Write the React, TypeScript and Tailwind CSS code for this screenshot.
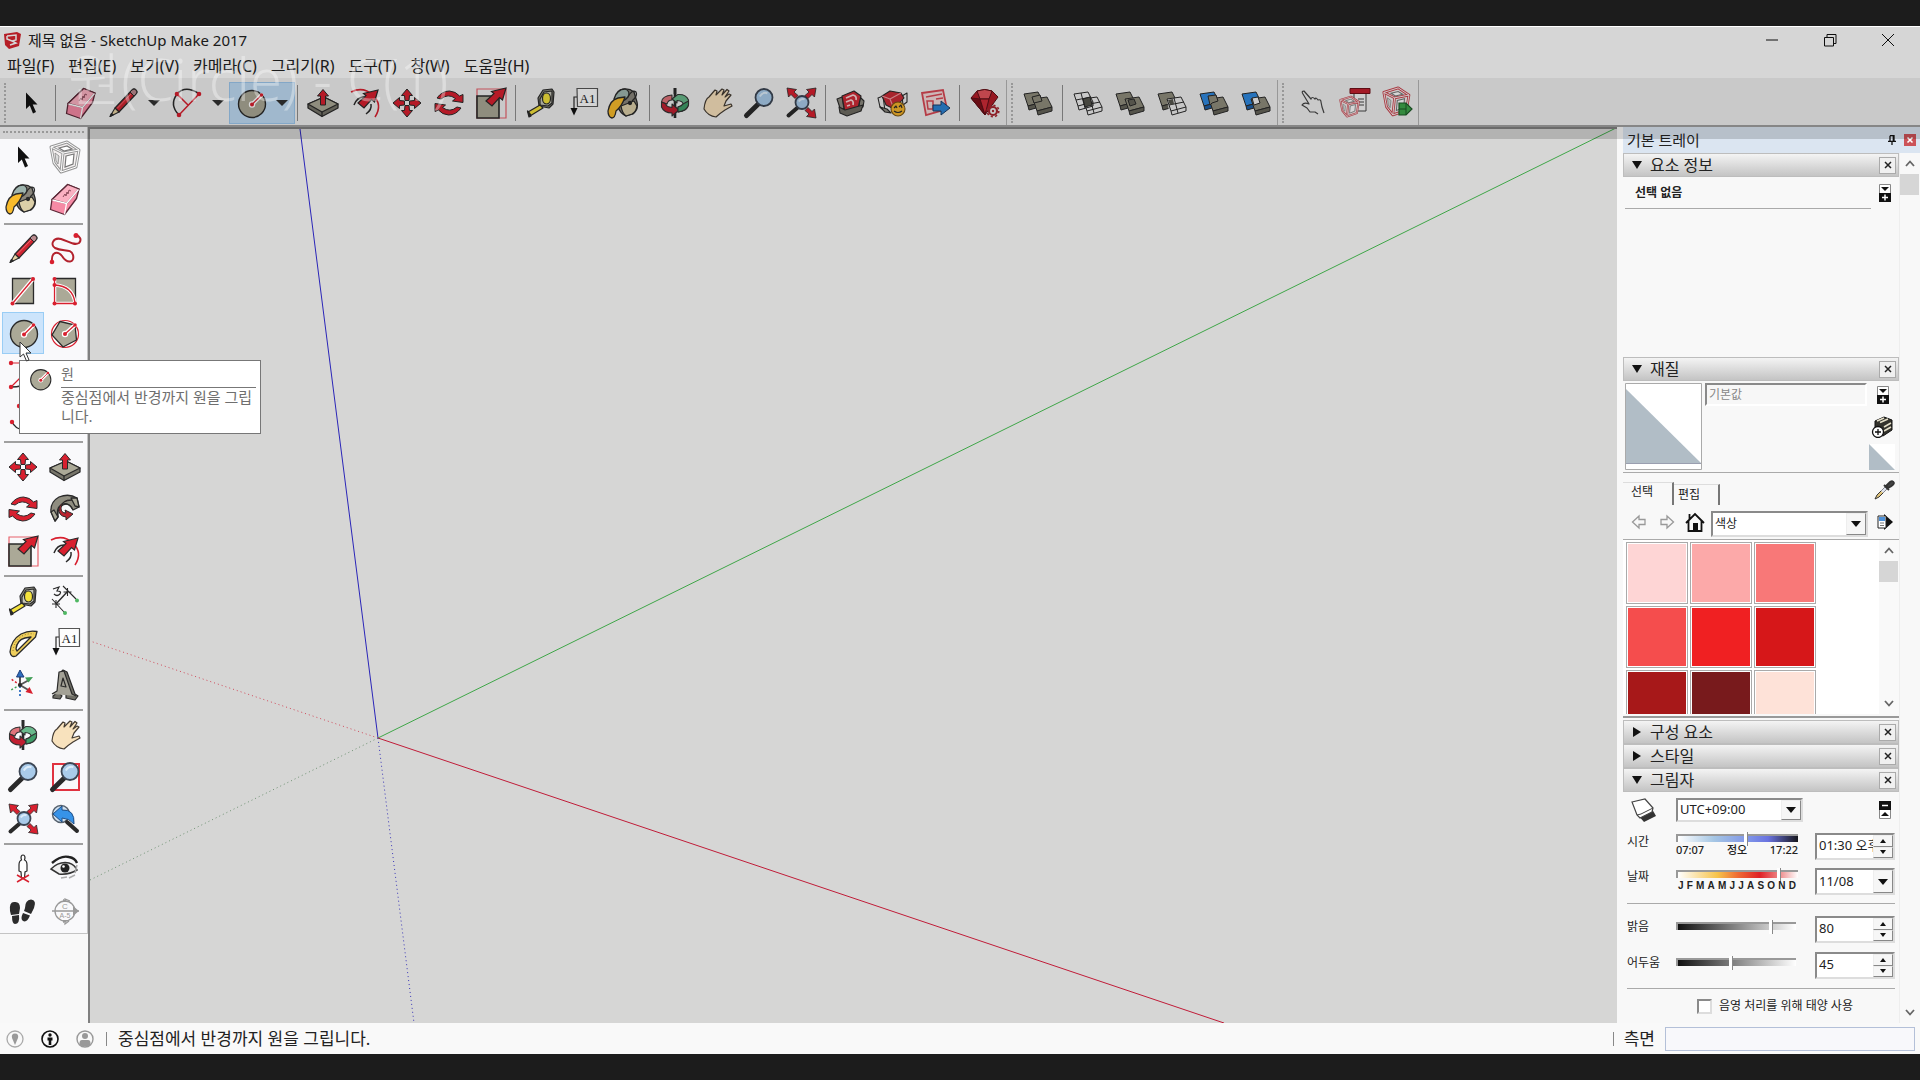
import { useState } from 'react';
import type { ReactNode } from 'react';

const RED = '#d8202f';
const INK = '#2a2a2a';
const STONE = '#aba997';

const MENUS = ['파일(F)', '편집(E)', '보기(V)', '카메라(C)', '그리기(R)', '도구(T)', '창(W)', '도움말(H)'];

const SWATCHES = [
  'bg-[#fed5d5]',
  'bg-[#fca9a9]',
  'bg-[#f87878]',
  'bg-[#f54d4d]',
  'bg-[#f02022]',
  'bg-[#d61719]',
  'bg-[#a71819]',
  'bg-[#781a1c]',
  'bg-[#fee2d8]',
];

// Reusable drawing parts

const bigArrow = (
  <path d="M31 1 L27.5 13 L24.5 10.5 L17 19 L11 14 L19 6.500 L16.500 4.500Z" fill={RED} stroke={INK} strokeWidth="1.200" />
);

const lens = (cx: number, cy: number, r: number) => (
  <>
    <path
      d={`M${cx - r * 0.7} ${cy + r * 0.8} L3.500 28.500`}
      stroke={INK}
      strokeWidth={r > 7 ? 5 : 4}
      strokeLinecap="round"
    />
    <circle cx={cx} cy={cy} r={r} fill="#a9cbea" stroke="#3c4654" strokeWidth="1.800" />
    <path d={`M${cx - r * 0.5} ${cy - 1} Q${cx - 1} ${cy - r * 0.7} ${cx + r * 0.4} ${cy - r * 0.5}`} stroke="#dcecf9" strokeWidth="2" fill="none" />
  </>
);

const cornerArrow = <path d="M31 1 L29.500 10 L27 7.500 L23 11.500 L20 8.500 L24 5 L21.500 2.500Z" fill={RED} stroke={INK} strokeWidth=".8" />;

const solid = (x: number, y: number, fill: string, side: string) => (
  <g stroke={INK} strokeWidth="1" strokeLinejoin="round">
    <path d={`M${x} ${y + 2} L${x + 14} ${y} L${x + 19} ${y + 10} L${x + 4} ${y + 14}Z`} fill={fill} />
    <path d={`M${x + 4} ${y + 14} L${x + 19} ${y + 10} L${x + 19} ${y + 14} L${x + 5} ${y + 18}Z`} fill={side} />
  </g>
);

const wireSolid = (x: number, y: number) => (
  <path
    d={`M${x} ${y + 2} L${x + 14} ${y} L${x + 19} ${y + 10} L${x + 4} ${y + 14}Z M${x + 4} ${y + 14} L${x + 5} ${y + 18} L${x + 19} ${y + 14} V${y + 10} M${x + 7} ${y + 1} L${x + 11} ${y + 16} M${x + 2} ${y + 8} L${x + 17} ${y + 5}`}
    fill="none"
    stroke={INK}
    strokeWidth="1"
  />
);

const cage = (stroke: string) => (
  <>
    <path
      d="M2 6 L18 1 L30 9 L27 26 L12 31 L5 22Z M2 6 L14 12 L30 9 M14 12 L12 31"
      fill="#f4f0f0"
      stroke={stroke}
      strokeWidth="3"
      strokeLinejoin="round"
    />
    <path
      d="M2 6 L18 1 L30 9 L27 26 L12 31 L5 22Z M2 6 L14 12 L30 9 M14 12 L12 31"
      fill="none"
      stroke="#fff"
      strokeWidth="1"
    />
    <path d="M10 7 L18 5 L23 8 L15 10Z M17 15 L25 13 L24 23 L16 26Z" fill="#fff" stroke="#777" strokeWidth="1.200" />
    <path d="M6 12 L10 15 L9 23 L7 20Z" fill="#ddd" stroke="#888" strokeWidth=".8" />
  </>
);

const ICONS: Record<string, ReactNode> = {
  select: <path d="M11 5.500 V22 L14.800 18.500 L18 26.500 L21 25 L17.700 17.500 H22.500Z" fill="#111" />,
  component: cage('#999'),
  paint: (
    <g stroke={INK} strokeWidth="1.300" strokeLinejoin="round" transform="translate(-1 0)">
      <path d="M7 13 L12 3 Q20 0 26 5 L29 15 Q31 22 25 27 L18 29 Q12 26 10 20Z" fill="#8a867c" />
      <path d="M13 19 L26 14 L29 19 Q28 25 24 27 L18 29 Q14 26 13 19Z" fill="#dccfa8" />
      <path d="M6 12 Q9 2 17 2 Q23 4 20 10 Q15 16 7 14Z" fill="#9fb5ae" />
      <path d="M20 10 Q24 2 28 5 Q30 9 24 14" fill="none" />
      <path d="M17 10 Q14 19 8 24 Q7 31 4 31 Q0 30 0 24 Q2 13 10 11Z" fill="#f8bb2c" />
      <circle cx="22" cy="16" r="1.500" fill={INK} />
    </g>
  ),
  eraser: (
    <g stroke="#5a2836" strokeWidth="1.300" strokeLinejoin="round">
      <path d="M18.700 1.500 L30 6 L27.500 15.500 L15.500 31.500 L1.500 26.500 L3 16.500Z" fill="#f68aa5" />
      <path d="M18.700 1.500 L30 6 L17.500 20.500 L3 16.500Z" fill="#fbb1c2" />
      <path d="M17.500 20.500 L15.500 31.500" stroke="#fff" />
      <path d="M3.500 17 L17.500 20.500 L29.500 6.500" stroke="#fff" fill="none" />
      <path d="M14 14 l2 -3 l1 2 l1 -4 l1 2 l1 -4 l2 1" fill="none" stroke="#8b4b5b" strokeWidth="1" />
    </g>
  ),
  pencil: (
    <g stroke={INK} strokeLinejoin="round">
      <path d="M8 21 L25 3 Q27 1 29 3 Q31 5 29 7 L12 25Z" fill="#cf2430" strokeWidth="1.200" />
      <path d="M23 5 L25 3 Q27 1 29 3 Q31 5 29 7 L27 9Z" fill="#b98a8e" strokeWidth="1" />
      <path d="M8 21 L12 25 L3 29.500Z" fill="#e8d3a4" strokeWidth="1.100" />
      <path d="M3 29.500 L4.500 26 L6.500 28Z" fill={INK} />
      <path d="M10 21.500 L24 7" stroke="#ef6a70" />
    </g>
  ),
  freehand: (
    <>
      <path
        d="M3 29 C2 18 9 18 13 23 C18 31 26 30 24 22 C22 15 14 19 6 15 C1 12 4 4 12 6 C19 8 25 13 30 10 C33 7 31 3 27 2"
        fill="none"
        stroke="#b3222d"
        strokeWidth="2"
      />
      <circle cx="3" cy="29" r="2.300" fill={RED} />
      <circle cx="27" cy="2.500" r="2.500" fill={RED} />
    </>
  ),
  rect: (
    <>
      <path d="M5.500 3.500 H26.500 V28.500 H5.500Z" fill={STONE} stroke={INK} strokeWidth="1.300" />
      <path d="M5.500 28.500 L26 4" stroke="#fff" strokeWidth="4" />
      <path d="M5.500 28.500 L26 4" stroke={RED} strokeWidth="1.300" />
      <circle cx="5.500" cy="28.500" r="2" fill={RED} />
      <circle cx="26" cy="4" r="2" fill={RED} />
    </>
  ),
  rotRect: (
    <>
      <path d="M5.500 3.500 H26.500 V28.500 H5.500Z" fill={STONE} stroke={INK} strokeWidth="1.300" />
      <path d="M5.500 4 V28.500 H26 M5.500 10 Q24 11 26 28" fill="none" stroke="#fff" strokeWidth="3.500" />
      <path d="M5.500 4 V28.500 H26 M5.500 10 Q24 11 26 28" fill="none" stroke={RED} strokeWidth="1.300" />
      {[[5.5, 4], [5.5, 10], [5.5, 28.5], [26, 28.5]].map(([x, y]) => (
        <circle key={`${x}-${y}`} cx={x} cy={y} r="2" fill={RED} />
      ))}
    </>
  ),
  circle: (
    <>
      <circle cx="17" cy="17" r="13.500" fill={STONE} stroke={INK} strokeWidth="1.400" />
      <path d="M17 17.500 L26.500 8" stroke="#fff" strokeWidth="4" strokeLinecap="round" />
      <circle cx="17" cy="17.500" r="3.200" fill="#fff" />
      <path d="M17 17.500 L26.500 8" stroke={RED} strokeWidth="1.200" />
      <circle cx="17" cy="17.500" r="2" fill={RED} />
      <circle cx="26.500" cy="8" r="1.800" fill={RED} />
    </>
  ),
  polygon: (
    <>
      <circle cx="16" cy="17" r="13.500" fill="#fff" stroke={RED} strokeWidth="1.200" />
      <path d="M11 4.500 L26 8 L27.500 23 L14 30 L3 18Z" fill={STONE} stroke={INK} strokeWidth="1.300" />
      <path d="M16 17 L26 8" stroke="#fff" strokeWidth="4" strokeLinecap="round" />
      <circle cx="16" cy="17" r="3.200" fill="#fff" />
      <path d="M16 17 L26 8" stroke={RED} strokeWidth="1.200" />
      <circle cx="16" cy="17" r="2" fill={RED} />
      <circle cx="26" cy="8" r="1.800" fill={RED} />
    </>
  ),
  arc: (
    <>
      <path d="M4 4 H20 M4 28 L24 8" stroke={RED} strokeWidth="1.200" />
      <path d="M4 28 Q28 28 28 8" fill="none" stroke={INK} strokeWidth="1.400" />
      <circle cx="4" cy="4" r="2.200" fill={RED} />
      <circle cx="4" cy="28" r="2.200" fill={RED} />
    </>
  ),
  arc3: (
    <>
      <path d="M5 21 Q12 34 28 24" fill="none" stroke={INK} strokeWidth="1.400" />
      <circle cx="5" cy="21" r="2.200" fill={RED} />
      <circle cx="12" cy="5" r="2.200" fill={RED} />
    </>
  ),
  arc2: (
    <>
      <path d="M8 28 Q-2 18 6 7 Q14 -2 27 6" fill="none" stroke={INK} strokeWidth="1.500" />
      <path d="M8 28 L27 8 M6 7 L17 18" stroke={RED} strokeWidth="1.500" />
      {[[8, 28], [28, 7], [6, 7]].map(([x, y]) => (
        <circle key={x} cx={x} cy={y} r="2.300" fill={RED} />
      ))}
    </>
  ),
  move: (
    <g fill={RED} stroke={INK} strokeWidth="1" strokeLinejoin="round">
      {['rotate(0 16 16)', 'rotate(90 16 16)', 'rotate(180 16 16)', 'rotate(270 16 16)'].map((t) => (
        <path key={t} transform={t} d="M16 2 L21.500 8.500 H18.500 L18 13.500 H14 L13.500 8.500 H10.500Z" />
      ))}
    </g>
  ),
  pushpull: (
    <g stroke={INK} strokeWidth="1.300" strokeLinejoin="round">
      <path d="M1 17 L17 10 L31 17 V21 L15 29.500 L1 21Z" fill="#77756a" />
      <path d="M1 17 L17 10 L31 17 L15 25Z" fill={STONE} />
      <path d="M15 25 V29.500" />
      <path d="M16 2.500 L21.500 9 H18.500 V18 H13.500 V9 H10.500Z" fill={RED} strokeWidth="1" />
    </g>
  ),
  rotate: (
    <g strokeLinejoin="round">
      {['rotate(0 16 16)', 'rotate(180 16 16)'].map((t) => (
        <g key={t} transform={t} fill={RED} stroke={INK} strokeWidth="1">
          <path d="M4 11 Q9 4 16.500 4 Q23 4.500 26.500 9 L30 7.500 V15.500 L19.500 14 L22.500 11.500 Q15 6 8 12Z" />
        </g>
      ))}
    </g>
  ),
  follow: (
    <g stroke={INK} strokeWidth="1.300" strokeLinejoin="round">
      <path d="M2 19 Q1 9 10 4 Q20 0 28 5 L30 14 L24 17 Q20 8 12 12 Q7 15 9 24 L6 28Z" fill="#8f8d80" />
      <path d="M9 24 Q8 15 14 12 Q20 9 24 17" fill="none" />
      <path d="M2 19 L5 17 L9 24 L6 28Z" fill={STONE} />
      <path d="M22 5 L28 5 L30 14 L26 13Z" fill={STONE} />
      <path d="M23 7 Q13 6 12 15 Q12 20 17 20 L16 17 L24 21 L17 27 L17 24 Q9 23 10 15 Q12 8 23 7Z" fill="#b9232f" strokeWidth="1" />
    </g>
  ),
  scale: (
    <>
      <path d="M2 2 H31 V31 H2Z" fill="none" stroke="#e8636d" strokeWidth="1.200" />
      <path d="M2 9 H24 V31 H2Z" fill={STONE} stroke={INK} strokeWidth="1.600" />
      {bigArrow}
    </>
  ),
  offset: (
    <>
      <path d="M2 5 Q14 -1 24 8 Q34 18 26 30" fill="none" stroke={RED} strokeWidth="1.600" />
      <path d="M5 18 Q8 10 15 10 M22 17 Q23 23 17 27" fill="none" stroke={INK} strokeWidth="1.500" />
      <g transform="translate(-2 2)">{bigArrow}</g>
    </>
  ),
  tape: (
    <g stroke={INK} strokeWidth="1.200" strokeLinejoin="round">
      <path d="M13 11 L18 3 L27 2 L29 5 L28 17 L24 21 L14 19Z" fill="#8b8b80" />
      <path d="M15 12 L19 5 L27 4 L27 16 L23 19 L15 18Z" fill="#c8c8ba" />
      <ellipse cx="21.500" cy="11.500" rx="4" ry="5.500" fill="#f4e23c" />
      <path d="M15 18 L3 25 L5 29 L18 21Z" fill="#f4e23c" />
      <path d="M3 24 L6 28 M2.500 24 L4 30 L6 29Z" fill={INK} />
    </g>
  ),
  dimension: (
    <g strokeWidth="1.400" fill="none">
      <path d="M7 19 L18.500 6.500" stroke={INK} />
      <path d="M3 14 L15 27 M14 1 L27 14 M3 19 H11 M14.500 7 H22.500 M7 15 V23 M18.500 3 V11" stroke={INK} strokeWidth="1.100" />
      <path d="M4 4 L10 2 L8 6 Q13 6 11 9 Q8 12 5 9" stroke={INK} strokeWidth="1.200" />
      <circle cx="16" cy="28" r="2" fill="#4fb862" />
      <circle cx="28" cy="15.500" r="2" fill="#4fb862" />
    </g>
  ),
  protractor: (
    <g stroke={INK} strokeWidth="1.300" strokeLinejoin="round">
      <path d="M3 25 Q4 13 14 7 Q22 3 30 4.500 L28.500 10 L9 29 Q4 31 3 25Z" fill="#efcf5c" />
      <path d="M9 22 Q10 13 18 11 L24 10 L10 24Z" fill="#fff" />
      <path d="M6 24 Q7 14 15 9 Q21 6 27 7" stroke="#8a7020" strokeWidth="1" strokeDasharray="1 2" />
    </g>
  ),
  text: (
    <>
      <path d="M10 1.500 H30.500 V19.500 H10.500Z" fill="#fdfdfd" stroke="#555" strokeWidth="1.200" />
      <path d="M10 10 H7 V22" fill="none" stroke={INK} strokeWidth="1.200" />
      <path d="M3.500 21 H10.500 L7 28.500Z" fill="#111" />
      <text x="20.500" y="15.500" textAnchor="middle" fontSize="13" fontFamily="Liberation Serif, serif" fill="#222">
        A1
      </text>
    </>
  ),
  axes: (
    <>
      <path d="M13 16 V6 M13 16 L22 11 M13 16 L23 22" stroke="#555" strokeWidth="2" />
      <path d="M13 1 L17 8 H9.500Z" fill="#2f6fc0" stroke="#1d3d78" />
      <path d="M26 8 L18 8.500 L21.500 13.500Z" fill="#3f9e55" />
      <path d="M26 25 L22.500 18 L18.500 23Z" fill={RED} />
      <path d="M13 16 L4 10" stroke={RED} strokeDasharray="2 2" strokeWidth="1.500" />
      <path d="M13 16 L4 21" stroke="#3f9e55" strokeDasharray="2 2" strokeWidth="1.500" />
      <path d="M13 17 V29" stroke="#2f6fc0" strokeDasharray="2 2" strokeWidth="1.800" />
      <circle cx="13" cy="16" r="2" fill={INK} />
    </>
  ),
  text3d: (
    <g stroke={INK} strokeWidth="1.200" strokeLinejoin="round">
      <path d="M4 27 L9 23 L11 4 L14 1 L18 3 L26 25 L29 27 L26 31 L17 29 L17 26 L19 25 L18 21 L12 20 L11 25 L13 27 L11 30 L4 29Z" fill="#6f6e66" />
      <path d="M3 25 L8 22 L10 3 L15 2 L23 25 L27 27 M12 17 L14 9 L17 18Z" fill="#a3a196" />
    </g>
  ),
  orbit: (
    <>
      <path d="M16 1 V31" stroke={INK} strokeWidth="2.600" />
      <g stroke="#333" strokeWidth="1.100" strokeLinejoin="round">
        <path d="M13 8 Q3 9 2.500 15 L8 17 Q9 13 13 13Z" fill="#e0747b" />
        <path d="M2.500 15 V20 Q5 26 13 26 V29 L20 23 L13 17 V20.500 Q7 20 7 17Z" fill="#c01f30" />
        <path d="M18 8 L13 12 L18 16 V13.500 Q24 14 24 17 Q23 19 19 20 V25 Q29 24 29.500 17 V13 Q27 7 19 7.500Z" fill="#69b98b" />
        <path d="M24 17 L29.500 14 V18 Q28 24 19 25 V20 Q23 19 24 17Z" fill="#3f9d68" />
      </g>
      <path d="M16 1 V7" stroke={INK} strokeWidth="2.600" />
    </>
  ),
  pan: (
    <path
      d="M3 22 Q4 12 8 10 L14 3 L16 4 L15 8 L21 2 L23 3 L21 8 L26 2.500 L28 4 L24 10 L28 7 L30 8 L25 14 L23 19 L30 17 L31 19 L24 23 Q18 27 15 30 Q7 29 3 22Z"
      fill="#f8e2bd"
      stroke="#443c33"
      strokeWidth="1.200"
      strokeLinejoin="round"
    />
  ),
  zoom: lens(21, 10.5, 8.5),
  zoomWindow: (
    <>
      <path d="M4 3 H30 V29 H4Z" fill="none" stroke="#e03340" strokeWidth="2" />
      {lens(21, 10.5, 8.5)}
    </>
  ),
  zoomExtents: (
    <>
      {lens(17, 15.5, 6.5)}
      {cornerArrow}
      <g transform="translate(33 0) scale(-1 1)">{cornerArrow}</g>
      <g transform="translate(0 32) scale(1 -1)">{cornerArrow}</g>
    </>
  ),
  previous: (
    <>
      <circle cx="12" cy="11" r="8.500" fill="#cfe0ef" stroke="#56616d" strokeWidth="1.500" />
      <path d="M18 19 L28 28" stroke={INK} strokeWidth="4" strokeLinecap="round" />
      <path d="M4 11 L13 3 V7 Q26 6 25 21 Q20 15 13 15 V19Z" fill="#3793e8" stroke="#1f4d84" strokeWidth="1" />
    </>
  ),
  position: (
    <>
      <path
        d="M16 2 Q18 2 18 5 L17.500 7 Q20 8 20 12 L20 18 L18 19 L17.500 25 H14.500 L14 19 L12 18 V12 Q12 8 14.500 7 L14 5 Q14 2 16 2Z"
        fill="#fff"
        stroke={INK}
        strokeWidth="1.200"
      />
      <path d="M10 22 L22 29 M22 22 L10 29" stroke={RED} strokeWidth="1.500" />
    </>
  ),
  look: (
    <>
      <path d="M3 10 Q12 2 20 4 Q26 5 28 10" fill="none" stroke="#222" strokeWidth="2.400" />
      <path d="M2 16 Q10 8 20 10 Q26 12 28 17 Q20 22 10 21Z" fill="#eee" stroke="#333" strokeWidth="1.500" />
      <circle cx="16" cy="15" r="4.500" fill="#222" />
      <circle cx="14.500" cy="13.500" r="1.300" fill="#fff" />
      <path d="M12 25 L18 24 M26 20 L28 12 M20 25 L26 22" stroke="#aaa" strokeWidth="1.500" />
    </>
  ),
  walk: (
    <g fill="#2c2c2c">
      <path d="M3 16 Q2 7 7 7 Q13 6 13 13 L12 19 L4 20Z M5 21 L12 20 Q13 29 8 29 Q5 29 5 21Z" />
      <path d="M18 13 Q18 5 24 4.500 Q30 5 27 13 L24 19 L17 16Z M16 18 L23 20.500 Q20 28 16 26 Q13 24 16 18Z" />
    </g>
  ),
  section: (
    <g fill="none" stroke="#999" strokeWidth="1.300">
      <circle cx="16" cy="16" r="10" />
      <path d="M3 16 H30 M16 6 V4 L21 6 M16 26 V29 L20 26" />
      <path d="M24 11 L30 16 L24 21Z M14 4 L20 7 H14Z M14 28 L20 25 H14Z" fill="#999" stroke="none" />
      <text x="16" y="14" textAnchor="middle" fontSize="8" stroke="none" fill="#999" fontFamily="Liberation Sans, sans-serif">
        C
      </text>
      <text x="16" y="23" textAnchor="middle" fontSize="7" stroke="none" fill="#999" fontFamily="Liberation Sans, sans-serif">
        A-5
      </text>
    </g>
  ),
  warehouse: (
    <g stroke={INK} strokeWidth="1.100" strokeLinejoin="round">
      <path d="M2 12 L7 10 L9 22 L5 21Z M25 10 L29 14 L28 20 L24 21Z" fill="#8c8a80" />
      <path d="M7 9 L19 4 L26 9 L23 21 L10 25Z" fill="#d02a36" />
      <path d="M11 11 L18 8 Q22 9 21 13 M11 15 L16 13 Q19 14 18 18 M12 19 L15 18" fill="none" stroke="#f7d3d5" strokeWidth="1.700" />
      <path d="M4 20 L10 23 L28 18 L26 24 L12 29 L5 26Z" fill="#6f6d64" />
    </g>
  ),
  extensions: (
    <g stroke={INK} strokeWidth="1.100" strokeLinejoin="round">
      <path d="M1 11 L6 9 L8 24 L3 20Z M25 9 L30 6 V15 L26 18Z" fill="#eee" />
      <path d="M5 9 L13 4 L24 6 L27 11 L17 22 L9 18Z" fill="#c92b36" />
      <path d="M5 9 L13 12 L24 6 M13 12 L17 22" fill="none" stroke="#f09aa0" />
      <path d="M3 20 L10 22 L14 26 L8 25Z" fill="#8c8a80" />
      <circle cx="21" cy="22" r="7" fill="#f3b32b" stroke="#7a5512" />
      <path d="M17 21 l2 -2 l1 2 M22 20 l2 -2 l1 3 M17 24 q4 3 8 0" fill="none" />
    </g>
  ),
  layout: (
    <>
      <path d="M3 6 L24 3 L28 22 L7 28Z" fill="#f4dada" stroke="#d84854" strokeWidth="1.800" />
      <path d="M7 10 L23 7 M8 14 H14 V22 H9Z M17 12 L24 11" fill="none" stroke="#d84854" strokeWidth="1.500" />
      <path d="M14 18 H22 V14 L31 21 L22 28 V24 H14Z" fill="#2d83d3" stroke="#1b3f69" strokeWidth="1" />
    </>
  ),
  ruby: (
    <>
      <g stroke="#5d0f17" strokeWidth="1" strokeLinejoin="round">
        <path d="M2 11 L8 4 Q16 1 23 4 L29 10 L16 28Z" fill="#b41c28" />
        <path d="M8 4 Q16 1 23 4 L20 12 L11 12Z" fill="#e4545c" />
        <path d="M2 11 L11 12 L16 28Z" fill="#7c1019" />
        <path d="M11 12 L20 12 L16 28Z" fill="#cf2b37" />
      </g>
      <circle cx="24" cy="24" r="4" fill="#f0f0f0" stroke="#a82730" strokeWidth="2.200" />
      <circle cx="24" cy="24" r="5.800" fill="none" stroke="#a82730" strokeWidth="1.600" strokeDasharray="2.200 2.300" />
      <circle cx="24" cy="24" r="1.200" fill="#a82730" />
    </>
  ),
  outerShell: (
    <>
      {solid(2, 5, '#8f8d7d', '#66655a')}
      {solid(11, 10, '#8f8d7d', '#66655a')}
      <path d="M10 10 L18 8 L20 14 L12 16Z" fill="#8f8d7d" stroke={INK} />
    </>
  ),
  intersect: (
    <>
      {wireSolid(2, 5)}
      {wireSolid(11, 10)}
      <path d="M11 12 L18 10 L20 18 L13 20Z" fill="#55554d" stroke={INK} />
    </>
  ),
  union: (
    <>
      {solid(2, 5, '#8f8d7d', '#66655a')}
      {solid(11, 10, '#8f8d7d', '#66655a')}
      <path d="M14 13 L20 12 L22 17 L16 19Z" fill="#66655a" stroke={INK} />
    </>
  ),
  subtract: (
    <>
      {solid(2, 5, '#8f8d7d', '#66655a')}
      <path d="M11 12 L25 10 L30 20 L16 28 L13 24Z" fill="#ececec" />
      {wireSolid(11, 10)}
      <path d="M12 13 L17 12 L18 17 L14 18Z" fill="#55554d" />
    </>
  ),
  trim: (
    <>
      {solid(2, 5, '#2f8ae0', '#1c5fa6')}
      {solid(11, 10, '#8f8d7d', '#66655a')}
      <path d="M10 9 L18 8 L20 14 L14 16 L12 18Z" fill="#8f8d7d" stroke={INK} />
    </>
  ),
  split: (
    <>
      {solid(2, 5, '#2f8ae0', '#1c5fa6')}
      {solid(11, 10, '#8f8d7d', '#66655a')}
      <path d="M12 11 L18 10 L20 16 L14 18Z" fill="#f2f2f2" stroke={INK} />
    </>
  ),
  interact: (
    <path
      d="M6 7 Q4 4 7 4 L14 12 Q15 9 18 12 Q19 10 21 13 Q24 12 24 15 L25 20 L27 26 M6 7 L12 17 Q7 15 5 18 L10 21 L13 25 H18 L21 27"
      fill="none"
      stroke="#444"
      strokeWidth="1.200"
      strokeLinejoin="round"
    />
  ),
  options: (
    <>
      <path d="M15 6 H27 V24 H15Z" fill="#f7f7f7" stroke="#444" />
      <path d="M19 12 H25 M19 15 H25 M19 18 H25" stroke="#444" />
      <path d="M11 1.500 H31 V6.500 H11Z" fill="#c3202e" stroke="#701019" />
      <g transform="translate(0 9) scale(.66)">{cage('#c8434d')}</g>
    </>
  ),
  attributes: (
    <>
      <g transform="translate(1 0) scale(.9)">{cage('#c8434d')}</g>
      <path d="M18 16 H25 L31 22 L25 28 H18Z" fill="#3fa54b" stroke="#1e5a28" strokeWidth="1.200" />
      <path d="M18 22 H25 M25 16 V28" stroke="#1e5a28" />
    </>
  ),
};

const TOOLBOX: [string, string][][] = [
  [['select', '선택'], ['component', '구성 요소'], ['paint', '페인트'], ['eraser', '지우기']],
  [
    ['pencil', '선'],
    ['freehand', '자유선'],
    ['rect', '직사각형'],
    ['rotRect', '회전 직사각형'],
    ['circle', '원'],
    ['polygon', '다각형'],
    ['arc', '호'],
    ['arc', '파이'],
    ['arc3', '3점 호'],
    ['arc3', '2점 호'],
  ],
  [['move', '이동'], ['pushpull', '밀기/끌기'], ['rotate', '회전'], ['follow', '따라가기'], ['scale', '배율'], ['offset', '오프셋']],
  [['tape', '줄자'], ['dimension', '치수'], ['protractor', '각도기'], ['text', '텍스트'], ['axes', '축'], ['text3d', '3D 텍스트']],
  [['orbit', '궤도'], ['pan', '이동 보기'], ['zoom', '확대'], ['zoomWindow', '창 확대'], ['zoomExtents', '범위 확대'], ['previous', '이전']],
  [['position', '카메라 배치'], ['look', '둘러보기'], ['walk', '걷기'], ['section', '단면']],
];

function Icon({ name, className = 'size-8' }: { name: string; className?: string }) {
  return (
    <svg viewBox="0 0 32 32" fill="none" className={`${className} shrink-0 overflow-visible`} aria-hidden="true">
      {ICONS[name]}
    </svg>
  );
}

function Tool({ name }: { name: string }) {
  return (
    <button type="button" aria-label={name} className="flex h-10 w-[42px] items-center justify-center">
      <Icon name={name} />
    </button>
  );
}

function DropTool({ name, active = false }: { name: string; active?: boolean }) {
  return (
    <div className={`flex h-10 w-16 items-center ${active ? 'bg-[#bfdcf5] outline outline-[#9cc8ee]' : ''}`}>
      <Tool name={name} />
      <button type="button" aria-label={`${name} menu`} className="flex h-6 w-5 items-center justify-center">
        <svg viewBox="0 0 12 8" className="h-2 w-3" aria-hidden="true">
          <path d="M0 1 H12 L6 7Z" fill="#333" />
        </svg>
      </button>
    </div>
  );
}

const Sep = () => <div className="mr-[4px] ml-[3px] h-9 w-px shrink-0 bg-[#8f8f8f]" />;
const Grip = () => <div className="h-10 border-l-2 border-dotted border-[#b5b5b5]" />;

function Toolbar() {
  return (
    <div className="flex h-[49px] items-center border-b-2 border-[#a0a0a0] bg-[#f0f0f0] pt-[2px] pl-1">
      <Grip />
      <div className="ml-1 flex items-center">
        <Tool name="select" />
        <Sep />
        <Tool name="eraser" />
        <DropTool name="pencil" />
        <DropTool name="arc2" />
        <DropTool name="circle" active />
        <Sep />
        {['pushpull', 'offset', 'move', 'rotate', 'scale'].map((n) => (
          <Tool key={n} name={n} />
        ))}
        <Sep />
        {['tape', 'text', 'paint'].map((n) => (
          <Tool key={n} name={n} />
        ))}
        <Sep />
        {['orbit', 'pan', 'zoom', 'zoomExtents'].map((n) => (
          <Tool key={n} name={n} />
        ))}
        <Sep />
        {['warehouse', 'extensions', 'layout'].map((n) => (
          <Tool key={n} name={n} />
        ))}
        <Sep />
        <Tool name="ruby" />
      </div>
      <div className="flex h-full items-center gap-1 border-x border-[#b5b5b5] pl-1">
        <Grip />
        <div className="flex items-center">
          <Tool name="outerShell" />
          <Sep />
          {['intersect', 'union', 'subtract', 'trim', 'split'].map((n) => (
            <Tool key={n} name={n} />
          ))}
        </div>
      </div>
      <div className="flex h-full items-center gap-2 border-r border-[#b5b5b5] pl-1">
        <Grip />
        <div className="flex items-center">
          {['interact', 'options', 'attributes'].map((n) => (
            <Tool key={n} name={n} />
          ))}
        </div>
      </div>
    </div>
  );
}

function CircleTooltip() {
  return (
    <div
      role="tooltip"
      className="absolute top-[48px] left-[17px] z-20 flex w-[242px] gap-[9px] border border-[#777] bg-white px-2 pt-1 pb-[7px] text-left text-[#6f6f6f]"
    >
      <Icon name="circle" className="mt-[2px] size-6" />
      <div className="-mr-1 flex-1">
        <p className="border-b border-[#777] pb-1 text-sm leading-[18px]">원</p>
        <p className="text-[15px] leading-[19px] break-all">중심점에서 반경까지 원을 그립니다.</p>
      </div>
      <svg viewBox="0 0 14 22" className="absolute -top-[20px] -left-[1px] h-[22px] w-[14px]" aria-hidden="true">
        <path d="M1 1 V16 L4.500 13 L7.500 20 L10 19 L7 12 H12Z" fill="#fff" stroke="#333" />
      </svg>
    </div>
  );
}

function Toolbox() {
  return (
    <aside className="w-[88px] shrink-0">
      <div className="border-r border-b border-[#c4c4c4] bg-[#f9f9fb] px-[2px] pb-px">
        <div className="mx-px h-[9px] pt-1">
          <div className="border-t-2 border-dotted border-[#b5b5b5]" />
        </div>
        {TOOLBOX.map((group, i) => (
          <div key={i}>
            {i > 0 && (
              <div className="px-[2px] py-[3px]">
                <div className="h-[2px] bg-[#a0a0a0]" />
              </div>
            )}
            <div className="grid w-[84px] grid-cols-2">
              {group.map(([name, label], j) => (
                <div key={j} className="relative">
                  <button
                    type="button"
                    aria-label={label}
                    className={`flex h-[42px] w-full items-center justify-center ${
                      name === 'circle' ? 'bg-[#cce4fb] outline -outline-offset-1 outline-[#99cdf5]' : ''
                    }`}
                  >
                    <Icon name={name} />
                  </button>
                  {name === 'circle' && <CircleTooltip />}
                </div>
              ))}
            </div>
          </div>
        ))}
      </div>
    </aside>
  );
}

function Viewport() {
  return (
    <main className="min-w-0 flex-1 overflow-hidden border-t-2 border-l-2 border-[#808080] bg-[#d6d6d5]">
      <svg className="h-full w-full" aria-label="drawing axes">
        <line x1="288" y1="609" x2="210" y2="0" stroke="#2a25b8" />
        <line x1="288" y1="609" x2="1528" y2="-2" stroke="#3fa648" />
        <line x1="288" y1="609" x2="1134" y2="894" stroke="#c01c38" />
        <line x1="288" y1="609" x2="0" y2="512" stroke="#d04a5a" strokeDasharray="1 3" />
        <line x1="288" y1="609" x2="0" y2="751" stroke="#6f9273" strokeDasharray="1 3" />
        <line x1="288" y1="609" x2="324" y2="894" stroke="#3a36b8" strokeDasharray="1 3" />
      </svg>
    </main>
  );
}

function PanelHeader({ title, open = false }: { title: string; open?: boolean }) {
  return (
    <div className="flex h-6 items-center border border-[#bdbdbd] bg-linear-to-b from-[#f4f4f4] to-[#c4c4c4] pr-[2px] pl-2">
      <svg viewBox="0 0 10 10" className="size-[10px]" aria-hidden="true">
        <path d={open ? 'M0 1 H10 L5 9Z' : 'M1 0 L9 5 L1 10Z'} fill="#111" />
      </svg>
      <h2 className="flex-1 pl-2 text-base leading-5">{title}</h2>
      <button
        type="button"
        aria-label={`${title} 닫기`}
        className="flex size-[17px] items-center justify-center border border-[#aaa] bg-[#f0f0f0]"
      >
        <svg viewBox="0 0 8 8" className="size-2" aria-hidden="true">
          <path d="M1 1 L7 7 M7 1 L1 7" stroke="#222" strokeWidth="1.500" />
        </svg>
      </button>
    </div>
  );
}

function DetailToggle({ up = false }: { up?: boolean }) {
  return (
    <button type="button" aria-label="세부 정보" className="h-[18px] w-3 shrink-0">
      <svg viewBox="0 0 12 18" className={`h-[18px] w-3 ${up ? 'rotate-180' : ''}`} aria-hidden="true">
        <path d="M.5 .5 H11.500 V17.500 H.5Z" fill="#fff" stroke="#888" />
        <path d="M0 9 H12 V18 H0Z" fill="#111" />
        <path d="M2 3 H10 L6 7Z" fill="#111" />
        <path d={up ? 'M3 13.500 H9' : 'M3 13.500 H9 M6 10.500 V16.500'} stroke="#fff" strokeWidth="1.500" />
      </svg>
    </button>
  );
}

function Chevron({ down = false }: { down?: boolean }) {
  return (
    <button type="button" aria-label={down ? '아래로' : '위로'} className="flex h-[21px] w-full items-center justify-center">
      <svg viewBox="0 0 10 7" className="h-[7px] w-[10px]" aria-hidden="true">
        <path d={down ? 'M1 1 L5 5.500 L9 1' : 'M1 6 L5 1.500 L9 6'} fill="none" stroke="#666" strokeWidth="1.800" />
      </svg>
    </button>
  );
}

function Select({ label, value, className }: { label: string; value: string; className: string }) {
  return (
    <div className={`flex border-2 border-[#8a8a8a] border-r-[#ddd] border-b-[#ddd] bg-white ${className}`}>
      <select aria-label={label} className="min-w-0 flex-1 appearance-none bg-white pl-[2px] outline-none">
        <option>{value}</option>
      </select>
      <span className="pointer-events-none flex w-5 items-center justify-center border border-[#eee] border-r-[#888] border-b-[#888] bg-[#f6f6f6]">
        <svg viewBox="0 0 10 6" className="h-[6px] w-[10px]" aria-hidden="true">
          <path d="M0 0 H10 L5 6Z" fill="#111" />
        </svg>
      </span>
    </div>
  );
}

function SpinBox({ label, value, onChange }: { label: string; value: string; onChange: (v: string) => void }) {
  const step = (d: number) => {
    const n = Number(value);
    if (!Number.isNaN(n)) onChange(String(Math.min(100, Math.max(0, n + d))));
  };
  return (
    <div className="flex h-[27px] w-20 border-2 border-[#8a8a8a] border-r-[#ddd] border-b-[#ddd] bg-white">
      <input
        aria-label={label}
        value={value}
        onChange={(e) => onChange(e.target.value)}
        className="w-0 flex-1 pb-1 pl-[2px] text-[13px] leading-4 outline-none"
      />
      <div className="flex w-5 flex-col">
        {[1, -1].map((d) => (
          <button
            key={d}
            type="button"
            aria-label={`${label} ${d}`}
            onClick={() => step(d)}
            className="flex flex-1 items-center justify-center border border-[#eee] border-r-[#888] border-b-[#888] bg-[#f6f6f6]"
          >
            <svg viewBox="0 0 6 4" className="h-1 w-[6px]" aria-hidden="true">
              <path d={d > 0 ? 'M0 4 H6 L3 0Z' : 'M0 0 H6 L3 4Z'} fill="#111" />
            </svg>
          </button>
        ))}
      </div>
    </div>
  );
}

const RANGE =
  'block h-2 w-full appearance-none border-t-2 border-l-2 border-[#999] outline-none [&::-webkit-slider-thumb]:h-[14px] [&::-webkit-slider-thumb]:w-1 [&::-webkit-slider-thumb]:appearance-none [&::-webkit-slider-thumb]:border-r [&::-webkit-slider-thumb]:border-[#888] [&::-webkit-slider-thumb]:bg-white';

function MaterialPanel() {
  return (
    <section>
      <PanelHeader title="재질" open />
      <div className="flex h-[92px] border-b border-[#aaa] pt-[2px] pr-1 pl-[2px]">
        <svg viewBox="0 0 77 87" className="h-[87px] w-[77px]" aria-hidden="true">
          <path d="M.5 .5 H76.500 V86.500 H.5Z" fill="#fff" stroke="#aaa" />
          <path d="M1 6 L76 80 H1Z" fill="#b1bdc6" />
          <path d="M1 80.500 H76" stroke="#9a9fb0" />
        </svg>
        <input
          aria-label="재질 이름"
          defaultValue="기본값"
          className="ml-[3px] h-[23px] w-0 flex-1 border-2 border-[#8a8a8a] border-r-white border-b-white bg-[#f7f7f7] px-[2px] pb-[2px] text-xs text-[#888]"
        />
        <div className="flex w-7 flex-col items-end gap-[6px] pt-[3px]">
          <div className="pr-[6px]">
            <DetailToggle />
          </div>
          <button type="button" aria-label="재질 만들기" className="pr-[2px]">
            <svg viewBox="0 0 22 22" className="size-[22px]" aria-hidden="true">
              <path d="M4 5 L13 1 L21 4 V14 L12 20 L4 16Z" fill="#33322c" stroke="#111" />
              <path d="M6 5 L13 2 M9 6.500 L17 3 M13 11 L20 7 M13 15 L20 11" stroke="#e4dfc8" strokeWidth="1.600" />
              <circle cx="7" cy="16" r="5.500" fill="#fff" stroke="#111" strokeWidth="1.300" />
              <path d="M4 16 H10 M7 13 V19" stroke="#111" strokeWidth="1.300" />
            </svg>
          </button>
          <svg viewBox="0 0 26 26" className="size-[26px]" aria-hidden="true">
            <path d="M0 0 H26 V26 H0Z" fill="#fff" />
            <path d="M0 0 L26 26 H0Z" fill="#b1bdc6" />
          </svg>
        </div>
      </div>

      <div className="flex h-8 items-end pr-1 text-xs">
        <button type="button" className="h-[23px] w-[51px] border-t border-r-2 border-[#ddd] border-r-[#777] pb-1 pl-2 text-left leading-4">
          선택
        </button>
        <button type="button" className="h-[21px] w-[46px] border-t border-r-2 border-[#ddd] border-r-[#777] pl-1 text-left leading-4">
          편집
        </button>
        <button type="button" aria-label="샘플 페인트" className="mb-1 ml-auto">
          <svg viewBox="0 0 22 22" className="size-[22px]" aria-hidden="true">
            <path d="M2 20 L4 16 L12 8 L14 10 L6 18Z" fill="#e2c57a" stroke="#333" />
            <path d="M8 12 L12 8 L14 10 L10 14Z" fill="#dfe3ee" />
            <path d="M11 6 L16 11 M13 7 L17 3 Q20 1 21 4 Q21 6 15 9Z" fill="#444" stroke="#333" strokeWidth="1.800" />
          </svg>
        </button>
      </div>

      <div className="flex h-[35px] items-center border-b border-[#aaa] pt-[3px] pr-[5px] pl-2">
        <div className="flex w-20 items-center gap-3 pb-1">
          {['back', 'forward'].map((dir) => (
            <button key={dir} type="button" aria-label={dir}>
              <svg viewBox="0 0 16 16" className={`size-4 ${dir === 'back' ? '' : '-scale-x-100'}`} aria-hidden="true">
                <path d="M1.500 8 L8 2 V5.500 H14 V10.500 H8 V14Z" fill="none" stroke="#999" strokeWidth="1.300" />
              </svg>
            </button>
          ))}
          <button type="button" aria-label="모델에서" className="-ml-[2px]">
            <svg viewBox="0 0 20 20" className="size-5" aria-hidden="true">
              <path d="M1 11 L10 2 L19 11 M3.500 9 V19 H16.500 V9 M4.500 7 V2" fill="none" stroke="#111" strokeWidth="1.800" />
              <path d="M8 11 H13 V19 H8Z" fill="#111" />
            </svg>
          </button>
        </div>
        <Select label="재질 모음" value="색상" className="h-[26px] flex-1 text-xs" />
        <button type="button" aria-label="세부 메뉴" className="ml-2 pb-1">
          <svg viewBox="0 0 18 18" className="size-[18px]" aria-hidden="true">
            <path d="M8 1 L17 9 L8 17Z" fill="#111" />
            <path d="M2 3 H10 V15 H2Z" fill="#fff" stroke="#222" />
            <path d="M3 4 H9 V8 H3Z" fill="#4c90d8" />
            <path d="M4 10 H8 M4 12.500 H8" stroke="#777" />
          </svg>
        </button>
      </div>

      <div className="flex h-[174px] bg-white">
        <div className="grid flex-1 auto-rows-[62px] grid-cols-[62px_62px_62px] gap-[2px] overflow-hidden pt-[2px] pl-[3px]">
          {SWATCHES.map((c) => (
            <button key={c} type="button" aria-label={c} className="border border-[#aaa] p-px">
              <span className={`block h-full w-full ${c}`} />
            </button>
          ))}
        </div>
        <div className="flex w-5 flex-col bg-[#f9f9f9]">
          <Chevron />
          <div className="h-[21px] w-[19px] bg-[#d6d6d6]" />
          <div className="mt-auto">
            <Chevron down />
          </div>
        </div>
      </div>
      <div className="mt-[2px] mb-[2px] h-[2px] bg-[#999]" />
    </section>
  );
}

function ShadowPanel() {
  const [light, setLight] = useState('80');
  const [dark, setDark] = useState('45');
  const [time, setTime] = useState('01:30 오후');

  return (
    <section className="flex-1">
      <PanelHeader title="그림자" open />
      <div className="pr-1 pl-1 text-xs">
        <div className="flex h-[35px] items-center">
          <button type="button" aria-label="그림자 표시" className="ml-1 w-[45px]">
            <svg viewBox="0 0 26 26" className="size-[26px]" aria-hidden="true">
              <path d="M6 17 L13 25 L25 19 L21 12Z" fill="#333" />
              <path d="M1 5 L14 2 L22 11 L21 15 L9 21 L6 18Z" fill="#fff" stroke="#444" strokeWidth="1.200" />
              <path d="M6 18 L10 17 L22 11" fill="none" stroke="#444" />
            </svg>
          </button>
          <Select label="표준 시간대" value="UTC+09:00" className="h-6 w-[127px] text-[13px]" />
          <div className="ml-auto pt-1 pr-1">
            <DetailToggle up />
          </div>
        </div>

        <div className="flex h-9 items-start pt-[6px]">
          <label htmlFor="time" className="w-[49px] pt-px leading-4">
            시간
          </label>
          <div className="w-[122px] pt-px">
            <input
              id="time"
              type="range"
              defaultValue="57"
              className={`${RANGE} bg-[linear-gradient(90deg,#fff,#a5c6e4_30%,#7d92e8_60%,#6a73e0_75%,#16161c)]`}
            />
            <div className="flex justify-between text-[11px] leading-4 font-medium">
              <span>07:07</span>
              <span>정오</span>
              <span>17:22</span>
            </div>
          </div>
          <div className="ml-auto">
            <SpinBox label="시각" value={time} onChange={setTime} />
          </div>
        </div>

        <div className="flex h-[41px] items-start border-b border-[#aaa] pt-[5px]">
          <label htmlFor="date" className="w-[49px] pt-px leading-4">
            날짜
          </label>
          <div className="w-[122px] pt-[2px]">
            <input
              id="date"
              type="range"
              defaultValue="85"
              className={`${RANGE} bg-[linear-gradient(90deg,#fff,#f6c34a_33%,#ef6a34_50%,#e02226_68%,#ee8585_84%,#fff)]`}
            />
            <div className="flex justify-between px-[2px] font-['Liberation_Sans',sans-serif] text-[10px] leading-4 font-bold">
              {'JFMAMJJASOND'.split('').map((m, i) => (
                <span key={i}>{m}</span>
              ))}
            </div>
          </div>
          <Select label="날짜 선택" value="11/08" className="ml-auto h-[27px] w-20 text-[13px]" />
        </div>

        <div className="border-b border-[#aaa] pt-3">
          {([
            ['밝음', light, setLight],
            ['어두움', dark, setDark],
          ] as [string, string, (v: string) => void][]).map(([label, value, set]) => (
            <div key={label} className="flex h-9 items-start">
              <label htmlFor={label} className="w-[49px] pt-[3px] leading-4 whitespace-nowrap">
                {label}
              </label>
              <div className="w-[120px] pt-[6px]">
                <input
                  id={label}
                  type="range"
                  value={Number(value) || 0}
                  onChange={(e) => set(e.target.value)}
                  className={`${RANGE} bg-[linear-gradient(90deg,#111,#fff)]`}
                />
              </div>
              <div className="ml-auto">
                <SpinBox label={label} value={value} onChange={set} />
              </div>
            </div>
          ))}
        </div>

        <label className="flex h-[34px] items-center gap-[7px] pl-[70px]">
          <input
            type="checkbox"
            className="size-[15px] appearance-none border-2 border-[#8a8a8a] border-r-[#ddd] border-b-[#ddd] bg-white"
          />
          음영 처리를 위해 태양 사용
        </label>
      </div>
    </section>
  );
}

function Tray() {
  return (
    <aside className="ml-[6px] flex w-[297px] shrink-0 flex-col bg-[#f8f8f8]">
      <div className="flex h-[26px] items-center bg-[#dbe5f1] pr-1 pl-1">
        <h1 className="flex-1 text-[15px] leading-6">기본 트레이</h1>
        <button type="button" aria-label="고정">
          <svg viewBox="0 0 8 10" className="mr-2 h-[10px] w-2" aria-hidden="true">
            <path d="M2 .7 H6 V6 M2 .7 V6 M0 6.300 H8 M4 6 V10 M5.300 1 V6" fill="none" stroke="#111" strokeWidth="1.300" />
          </svg>
        </button>
        <button type="button" aria-label="닫기" className="flex size-3 items-center justify-center bg-[#cc5257]">
          <svg viewBox="0 0 8 8" className="size-2" aria-hidden="true">
            <path d="M1.500 1.500 L6.500 6.500 M6.500 1.500 L1.500 6.500" stroke="#fff" strokeWidth="1.600" />
          </svg>
        </button>
      </div>
      <div className="flex flex-1">
        <div className="flex w-[276px] flex-col">
          <section className="h-[204px]">
            <PanelHeader title="요소 정보" open />
            <div className="flex h-8 items-center justify-between pr-2 pl-3">
              <p className="text-xs font-semibold">선택 없음</p>
              <DetailToggle />
            </div>
            <div className="mr-7 ml-[2px] -mt-px border-t border-[#aaa]" />
          </section>
          <MaterialPanel />
          <PanelHeader title="구성 요소" />
          <PanelHeader title="스타일" />
          <ShadowPanel />
        </div>
        <div className="flex w-[21px] flex-col border-l border-[#eee]">
          <Chevron />
          <div className="h-[21px] w-[19px] bg-[#d6d6d6]" />
          <div className="mt-auto">
            <Chevron down />
          </div>
        </div>
      </div>
    </aside>
  );
}

function StatusBar() {
  return (
    <footer className="flex h-[31px] items-center bg-[#f9f9f9] pr-[5px] pl-[6px]">
      <div className="flex gap-[17px]">
        <button type="button" aria-label="위치">
          <svg viewBox="0 0 18 18" className="size-[18px]" aria-hidden="true">
            <circle cx="9" cy="9" r="8" fill="none" stroke="#aaa" strokeWidth="1.300" />
            <path d="M9 15 L6 8 Q5 3.500 9 3.500 Q13 3.500 12 8Z" fill="#999" />
          </svg>
        </button>
        <button type="button" aria-label="정보">
          <svg viewBox="0 0 18 18" className="size-[18px]" aria-hidden="true">
            <circle cx="9" cy="9" r="8" fill="none" stroke="#111" strokeWidth="1.600" />
            <circle cx="9" cy="5" r="1.700" fill="#111" />
            <path d="M6.500 7.500 H11.500 V10.500 H10.300 V15 H7.700 V10.500 H6.500Z" fill="#111" />
          </svg>
        </button>
        <button type="button" aria-label="로그인">
          <svg viewBox="0 0 18 18" className="size-[18px]" aria-hidden="true">
            <circle cx="9" cy="9" r="8" fill="none" stroke="#999" strokeWidth="1.400" />
            <circle cx="9" cy="6" r="3" fill="#999" />
            <path d="M3.500 15 Q3 10 6 10 H12 Q15 10 14.500 15 Q9 18 3.500 15Z" fill="#999" />
          </svg>
        </button>
      </div>
      <div className="mr-[11px] ml-3 h-[14px] w-px bg-[#888]" />
      <p className="flex-1 text-[17px] leading-6">중심점에서 반경까지 원을 그립니다.</p>
      <div className="mr-[10px] h-[14px] w-px bg-[#888]" />
      <label htmlFor="measure" className="text-[17px] leading-6">
        측면
      </label>
      <input id="measure" className="ml-[10px] h-6 w-[250px] border border-[#b4c0d8] bg-[#f8f8fb]" />
    </footer>
  );
}

export default function App() {
  return (
    <div className="flex min-h-screen flex-col bg-[#1c1c1c] font-['Noto_Sans','Noto_Sans_CJK_KR',sans-serif] text-[#222]">
      <div className="h-[26px]" />
      <div className="relative flex flex-1 flex-col border-t border-white bg-[#f8f8f8]">
        <header>
          <div className="flex h-[26px] items-center bg-white pr-[3px] pl-1">
            <svg viewBox="0 0 18 18" className="size-[18px]" aria-hidden="true">
              <path d="M0 3 L13 1 L17 3 L15 15 L5 18 L1 14Z" fill="#d8242f" />
              <path d="M3 5 L12 4 V9 L8 10 L12 12 L6 14 M3 5 V8 L8 10" fill="none" stroke="#fff" strokeWidth="1.500" />
            </svg>
            <span className="flex-1 pl-[6px] text-[15px]">제목 없음 - SketchUp Make 2017</span>
            {[
              ['최소화', 'M0 6 H12'],
              ['복원', 'M.5 3.500 H9.500 V12 H.5Z M3 3 V.5 H12 V9.500 H10'],
              ['닫기', 'M0 0 L12 12 M12 0 L0 12'],
            ].map(([label, d]) => (
              <button key={label} type="button" aria-label={label} className="flex h-6 w-[58px] items-center justify-center">
                <svg viewBox="0 0 12 12" className="size-3 overflow-visible" aria-hidden="true">
                  <path d={d} fill="none" stroke="#111" />
                </svg>
              </button>
            ))}
          </div>
          <nav className="flex h-[25px] items-center gap-[14px] bg-white pt-px pl-[7px] text-base leading-5">
            {MENUS.map((m) => (
              <a key={m} href="#menu">
                {m}
              </a>
            ))}
          </nav>
          <Toolbar />
        </header>

        <div className="flex flex-1">
          <Toolbox />
          <Viewport />
          <Tray />
        </div>
        <StatusBar />

        {/* Shaded caption band over the window's top */}
        <div className="pointer-events-none absolute inset-x-0 top-0 h-28 bg-black/16">
          <p className="pt-[20px] pl-[68px] text-[58px] leading-[64px] font-light text-white/35">원(Circle) - C(1)</p>
        </div>
      </div>
      <div className="h-[26px]" />
    </div>
  );
}
